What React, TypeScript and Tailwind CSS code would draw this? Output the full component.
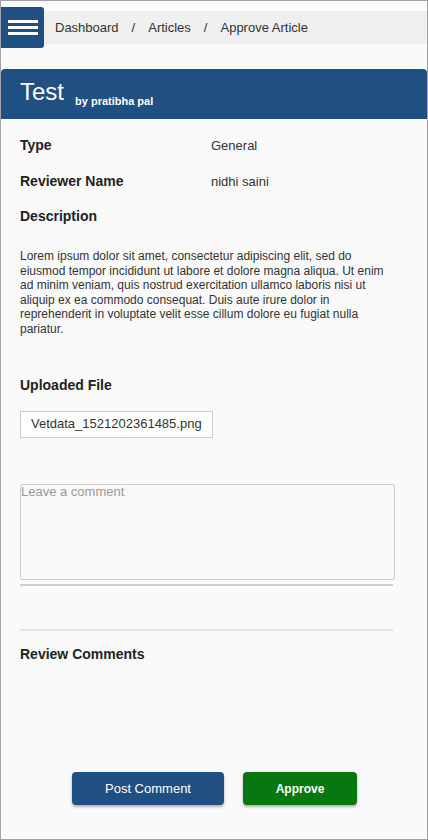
export default function App() {
  return (
    <div
      className="w-[428px] h-[840px] border border-[#a3a3a3] bg-[#fafafa] text-[#222] flex flex-col"
      style={{ fontFamily: "Arial, 'Liberation Sans', sans-serif" }}
    >
      {/* top bar */}
      <div className="flex items-center mt-[6px]">
        <div className="w-[43px] h-[41px] bg-[#205082] rounded-r-[3px] flex flex-col justify-center items-center gap-[3px]">
          <span className="block w-[30px] h-[3px] bg-white" />
          <span className="block w-[30px] h-[3px] bg-white" />
          <span className="block w-[30px] h-[3px] bg-white" />
        </div>
        <div className="flex-1 h-[33px] bg-[#efefef] flex items-center pl-[11px] text-[13px] text-[#333]">
          <span>Dashboard</span>
          <span className="mx-[13px]">/</span>
          <span>Articles</span>
          <span className="mx-[13px]">/</span>
          <span>Approve Article</span>
        </div>
      </div>

      {/* card header */}
      <div className="mt-[21px] h-[50px] bg-[#205082] rounded-t-[4px] flex items-end pl-[19px] pb-[15px] text-white">
        <span className="text-[24px] leading-none">Test</span>
        <span className="text-[11px] font-bold ml-[11px] mb-[-3px] leading-none">by pratibha pal</span>
      </div>

      {/* details */}
      <div className="px-[19px] pt-[16px] flex flex-col text-[14px]">
        <div className="grid grid-cols-[191px_1fr] h-[16px] items-center">
          <span className="font-bold">Type</span>
          <span className="text-[#333] text-[13px]">General</span>
        </div>
        <div className="grid grid-cols-[191px_1fr] h-[16px] items-center mt-[20px]">
          <span className="font-bold">Reviewer Name</span>
          <span className="text-[#333] text-[13px]">nidhi saini</span>
        </div>
        <div className="h-[16px] flex items-center mt-[21px] font-bold">Description</div>

        <p className="mt-[25px] text-[12px] leading-[14.6px] text-[#333] pr-[18px]">
          Lorem ipsum dolor sit amet, consectetur adipiscing elit, sed do eiusmod tempor incididunt ut
          labore et dolore magna aliqua. Ut enim ad minim veniam, quis nostrud exercitation ullamco
          laboris nisi ut aliquip ex ea commodo consequat. Duis aute irure dolor in reprehenderit in
          voluptate velit esse cillum dolore eu fugiat nulla pariatur.
        </p>

        <div className="h-[16px] flex items-center mt-[41px] font-bold">Uploaded File</div>

        <div className="mt-[17px] self-start h-[27px] border border-[#ccc] bg-white px-[10px] flex items-center text-[13px] text-[#333]">
          Vetdata_1521202361485.png
        </div>

        <textarea
          className="mt-[46px] w-[375px] h-[96px] border border-[#ccc] rounded-[2px] bg-[#fafafa] text-[13px] leading-[13px] placeholder:text-[#999] outline-none resize-none p-0"
          placeholder="Leave a comment"
        />
        <div className="mt-[4px] w-[373px] h-[2px] bg-[#d0d0d0]" />
        <div className="mt-[43px] w-[373px] h-[2px] bg-[#e2e2e2]" />

        <div className="h-[16px] flex items-center mt-[16px] font-bold">Review Comments</div>
      </div>

      {/* actions */}
      <div className="mt-auto mb-[34px] flex justify-center gap-[19px] pl-[1px]">
        <button className="w-[152px] h-[33px] rounded-[4px] bg-[#205082] text-white text-[13px] shadow-[0_2px_3px_rgba(0,0,0,0.3)]">
          Post Comment
        </button>
        <button className="w-[114px] h-[33px] rounded-[4px] bg-[#077811] text-white text-[12px] font-bold shadow-[0_2px_3px_rgba(0,0,0,0.3)]">
          Approve
        </button>
      </div>
    </div>
  );
}
